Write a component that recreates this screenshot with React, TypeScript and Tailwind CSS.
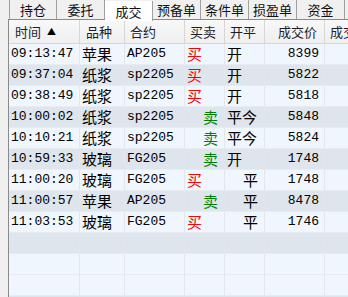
import React from "react";

const tabs = ["持仓", "委托", "成交", "预备单", "条件单", "损盈单", "资金"];

type Row = [string, string, string, string, string, string];
const rows: Row[] = [
  ["09:13:47", "苹果", "AP205", "买", "开", "8399"],
  ["09:37:04", "纸浆", "sp2205", "买", "开", "5822"],
  ["09:38:49", "纸浆", "sp2205", "买", "开", "5818"],
  ["10:00:02", "纸浆", "sp2205", "卖", "平今", "5848"],
  ["10:10:21", "纸浆", "sp2205", "卖", "平今", "5824"],
  ["10:59:33", "玻璃", "FG205", "卖", "开", "1748"],
  ["11:00:20", "玻璃", "FG205", "买", "平", "1748"],
  ["11:00:57", "苹果", "AP205", "卖", "平", "8478"],
  ["11:03:53", "玻璃", "FG205", "买", "平", "1746"],
];

const cjk = { fontFamily: '"Noto Sans CJK SC", "Noto Sans", sans-serif' };
const mono = { fontFamily: '"Liberation Mono", "Noto Sans CJK SC", monospace' };

const cols = "grid grid-cols-[71px_45px_60px_40px_40px_60px_60px]";
const cell = "h-[20px] border-r border-[#e3e7ec] flex items-center overflow-hidden whitespace-nowrap";

export default function App() {
  const emptyBg = ["bg-[#dfe5ec]", "bg-[#f0f6fe]", "bg-[#f0f6fe]", "bg-[#dfe5ec]"];
  return (
    <div className="w-[348px] h-[297px] bg-[#f0f0f0] overflow-hidden flex flex-col pl-[8px]">
      {/* tabs */}
      <div className="h-[19px] flex pl-[1px] relative z-10">
        {tabs.map((t, i) => (
          <div
            key={t}
            className={
              "w-[48px] flex items-center justify-center text-[13px] text-[#111] border-r border-[#a0a0a0] " +
              (i === 0 ? "border-l " : "") +
              (i === 2 ? "bg-white h-[20px] mt-[1px]" : "bg-[#f0f0f0] h-[19px]")
            }
            style={cjk}
          >
            <span className="leading-none">{t}</span>
          </div>
        ))}
      </div>
      {/* table */}
      <div className="flex-1 border-l border-t border-[#8a8a8a] bg-[#f0f6fe] overflow-hidden">
        {/* header */}
        <div className={cols + " h-[24px] bg-gradient-to-b from-[#f8f8f8] to-[#efefef] border-b border-[#d6d6d6] text-[13px] text-[#1c1c2c]"} style={cjk}>
          <div className="border-r border-[#d6d6d6] flex items-center pl-[6px] gap-[6px]">
            <span>时间</span>
            <span className="text-[9px] text-black">▲</span>
          </div>
          <div className="border-r border-[#d6d6d6] flex items-center pl-[6px]">品种</div>
          <div className="border-r border-[#d6d6d6] flex items-center pl-[5px]">合约</div>
          <div className="border-r border-[#d6d6d6] flex items-center pl-[5px]">买卖</div>
          <div className="border-r border-[#d6d6d6] flex items-center pl-[5px]">开平</div>
          <div className="border-r border-[#d6d6d6] flex items-center justify-end pr-[7px]">成交价</div>
          <div className="flex items-center pl-[5px] whitespace-nowrap overflow-hidden">成交量</div>
        </div>
        {/* rows */}
        {rows.map((r, i) => (
          <div
            key={i}
            className={cols + " border-b border-[#e8ecf0] " + (i % 2 === 0 ? "bg-[#f0f6fe]" : "bg-[#dfe5ec]")}
          >
            <div className={cell + " pl-[2px] text-[13px] text-black"} style={mono}>{r[0]}</div>
            <div className={cell + " pl-[2px] text-[15px] text-black"} style={cjk}>{r[1]}</div>
            <div className={cell + " pl-[2px] text-[13px] text-black"} style={mono}>{r[2]}</div>
            <div
              className={cell + " text-[15px] " + (r[3] === "买" ? "pl-[2px] text-[#ff0000]" : "pl-[18px] text-[#008000]")}
              style={cjk}
            >
              {r[3]}
            </div>
            <div className={cell + " text-[15px] text-black " + (r[4] === "平" ? "pl-[18px]" : "pl-[2px]")} style={cjk}>
              {r[4]}
            </div>
            <div className={cell + " justify-end pr-[5px] text-[13px] text-black"} style={mono}>{r[5]}</div>
            <div className="h-[20px]" />
          </div>
        ))}
        {emptyBg.map((bg, i) => (
          <div key={"e" + i} className={cols + " border-b border-[#e8ecf0] " + bg}>
            <div className={cell} />
            <div className={cell} />
            <div className={cell} />
            <div className={cell} />
            <div className={cell} />
            <div className={cell} />
            <div className="h-[20px]" />
          </div>
        ))}
      </div>
    </div>
  );
}
